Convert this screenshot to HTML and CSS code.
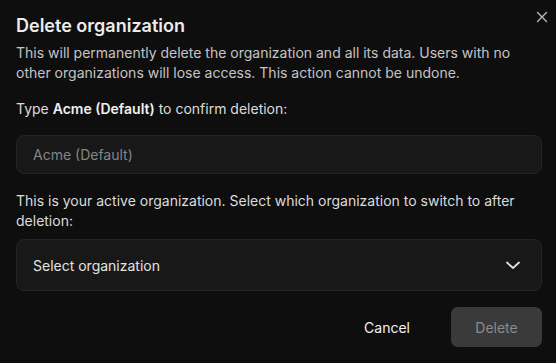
FILE: index.html
```html
<!DOCTYPE html>
<html>
<head>
<meta charset="utf-8">
<link rel="stylesheet" href="styles.css">
</head>
<body>
<div class="dialog">
  <button class="close" aria-label="Close">
    <svg width="12" height="12" viewBox="0 0 12 12"><path d="M1.5 1.5L10.5 10.5M10.5 1.5L1.5 10.5" stroke="currentColor" stroke-width="1.4" stroke-linecap="round"/></svg>
  </button>
  <h2 class="title">Delete organization</h2>
  <p class="desc">This will permanently delete the organization and all its data. Users with no other organizations will lose access. This action cannot be undone.</p>
  <p class="label">Type <strong>Acme (Default)</strong> to confirm deletion:</p>
  <input class="input" type="text" placeholder="Acme (Default)">
  <p class="label label-2">This is your active organization. Select which organization to switch to after deletion:</p>
  <div class="select">
    <span>Select organization</span>
    <svg width="18" height="18" viewBox="0 0 18 18"><path d="M3 6.5L9 12L15 6.5" fill="none" stroke="currentColor" stroke-width="1.8" stroke-linecap="round" stroke-linejoin="round"/></svg>
  </div>
  <div class="actions">
    <button class="btn cancel">Cancel</button>
    <button class="btn delete">Delete</button>
  </div>
</div>
</body>
</html>
```
FILE: styles.css
```css
* { box-sizing: border-box; }
html, body { margin: 0; height: 100%; }
body {
  background: #0f0e0f;
  font-family: Inter, "Noto Sans", sans-serif;
  color: #e6e6e6;
}
.dialog {
  position: relative;
  padding: 12px 14px 16px 16px;
  display: flex;
  flex-direction: column;
}
.close {
  position: absolute;
  top: 11px;
  right: 8px;
  width: 12px;
  height: 12px;
  padding: 0;
  border: 0;
  background: none;
  color: #b8b8b8;
  display: flex;
}
.title {
  margin: 0;
  font-size: 18px;
  line-height: 28px;
  font-weight: 600;
  color: #ececec;
}
.desc {
  margin: 3px 0 0;
  font-size: 14px;
  line-height: 20px;
  color: #c4c4c4;
}
.label {
  margin: 16px 0 0;
  font-size: 14px;
  line-height: 20px;
  color: #dcdcdc;
}
.label strong { font-weight: 600; color: #f0f0f0; }
.input {
  margin-top: 16px;
  height: 39px;
  width: 100%;
  background: #181818;
  border: 1px solid #242424;
  border-radius: 8px;
  padding: 0 16px;
  font-family: inherit;
  font-size: 14px;
  color: #e6e6e6;
  outline: none;
}
.input::placeholder { color: #858585; }
.label-2 { margin-top: 17px; }
.select {
  margin-top: 8px;
  height: 52px;
  background: #181818;
  border: 1px solid #242424;
  border-radius: 8px;
  padding: 0 19px 0 16px;
  display: flex;
  align-items: center;
  justify-content: space-between;
  font-size: 14px;
  color: #e2e2e2;
}
.select svg { color: #e0e0e0; }
.actions {
  margin-top: 16px;
  display: flex;
  justify-content: flex-end;
  gap: 18px;
}
.btn {
  height: 40px;
  border: 0;
  border-radius: 7px;
  font-family: inherit;
  font-size: 14px;
  font-weight: 400;
  background: none;
  padding: 0 23px;
}
.cancel { color: #f2f2f2; }
.delete {
  width: 91px;
  background: #3a3a3a;
  color: #8a8a8a;
}
```
